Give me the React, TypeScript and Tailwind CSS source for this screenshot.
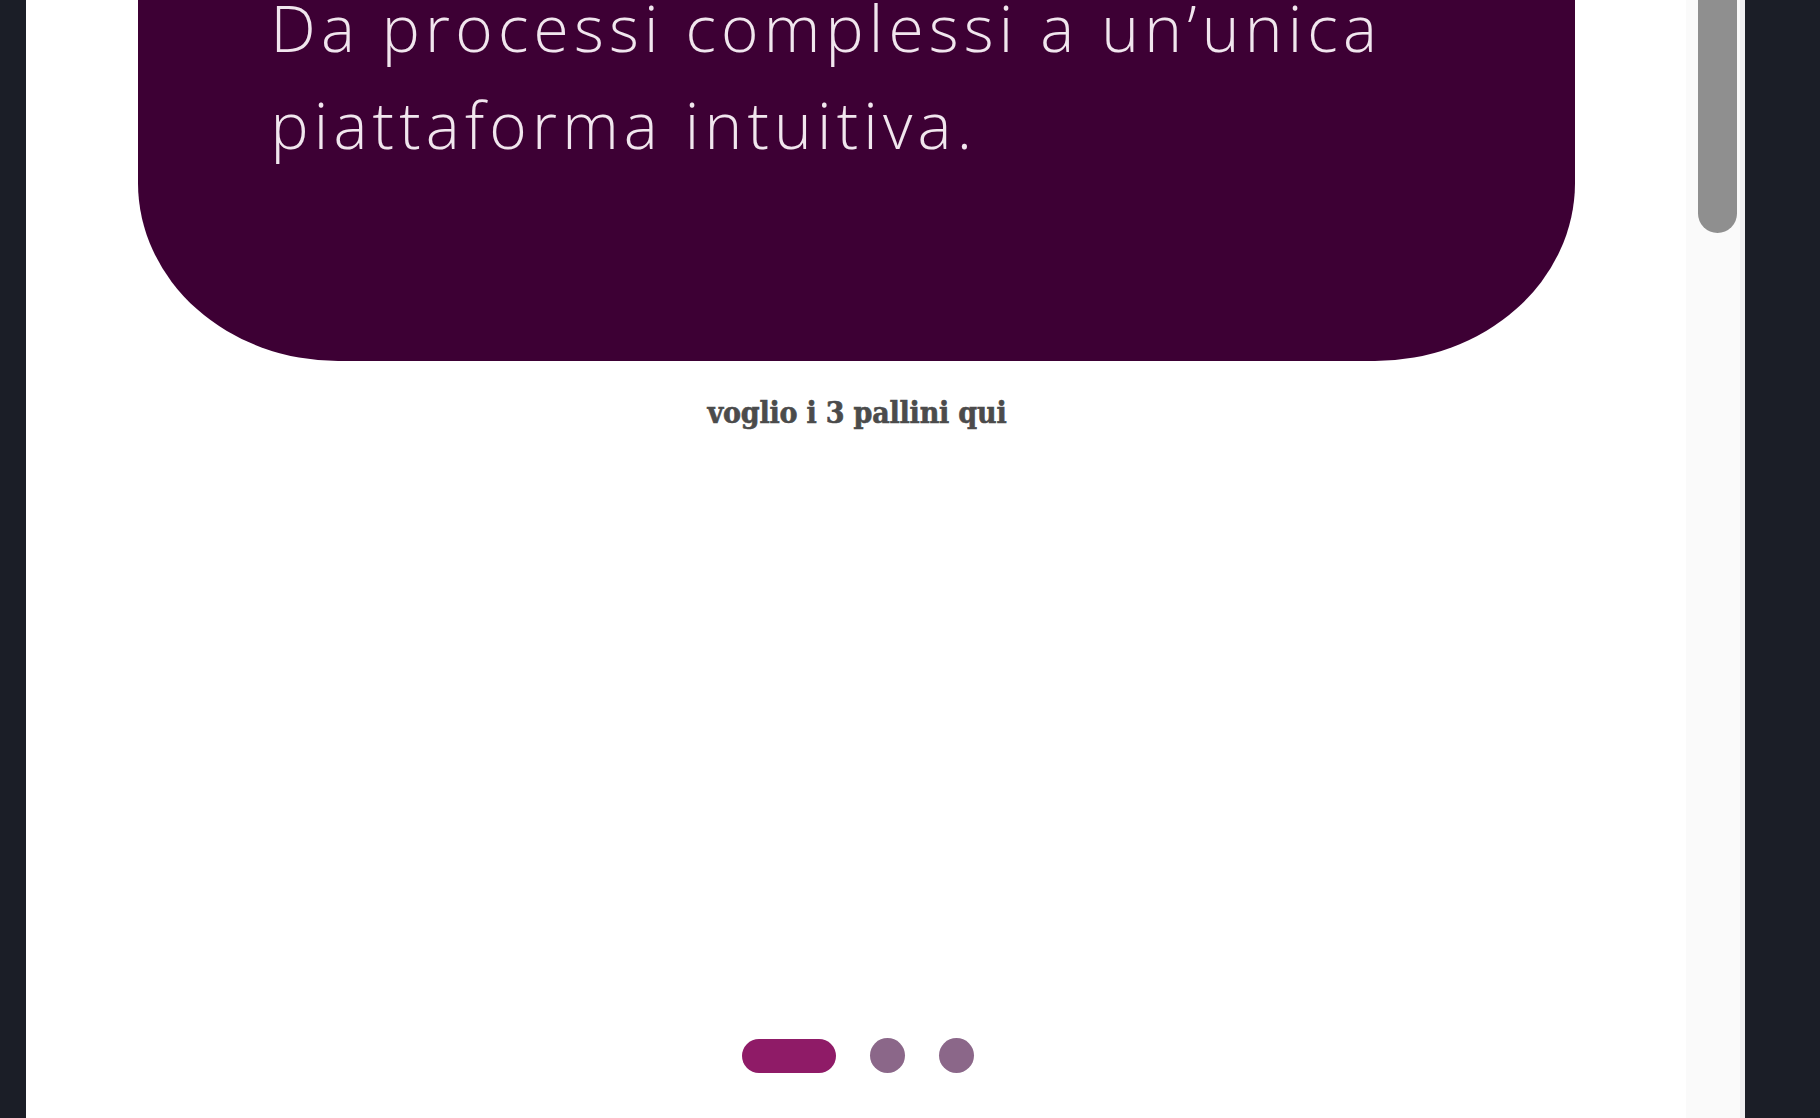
import React from "react";

export default function App() {
  return (
    <div className="flex h-[1118px] w-full overflow-hidden bg-[#1b1e27]">
      <div className="ml-[26px] flex h-full w-[1719px] bg-white">
        {/* main content */}
        <div className="flex h-full w-[1660px] flex-col items-center">
          <div className="mt-[-121px] w-[1437px] rounded-b-[200px_178px] bg-[#3d0034] pb-[188px] pl-[133px] pt-[100px]">
            <p
              className="text-[64px] font-light leading-[97px] tracking-[5.2px] text-[#f1e6ee]"
              style={{ fontFamily: "'Open Sans', 'Noto Sans', sans-serif" }}
            >
              Da processi complessi a un’unica
              <br />
              piattaforma intuitiva.
            </p>
          </div>
          <p
            className="mt-[32px] pl-[2px] text-[30px] font-black leading-[40px] tracking-[-0.2px] text-[#4b4b4b] [-webkit-text-stroke:0.6px_#4b4b4b]"
            style={{ fontFamily: "'DejaVu Serif', 'Liberation Serif', serif", fontStretch: "condensed" }}
          >
            voglio i 3 pallini qui
          </p>
          <div className="mt-auto mb-[45px] ml-[4px] flex items-center gap-[34px]">
            <span className="h-[34px] w-[94px] rounded-full bg-[#8f1b67]" />
            <span className="h-[35px] w-[35px] rounded-full bg-[#8b6789]" />
            <span className="h-[35px] w-[35px] rounded-full bg-[#8b6789]" />
          </div>
        </div>
        {/* scrollbar track */}
        <div className="flex h-full w-[54px] justify-start bg-[#fafafa] pl-[12px]">
          <div className="h-[233px] w-[39px] rounded-b-[20px] bg-[#8f8f8f]" />
        </div>
        <div className="h-full w-[5px] bg-[#eeeef0]" />
      </div>
    </div>
  );
}
